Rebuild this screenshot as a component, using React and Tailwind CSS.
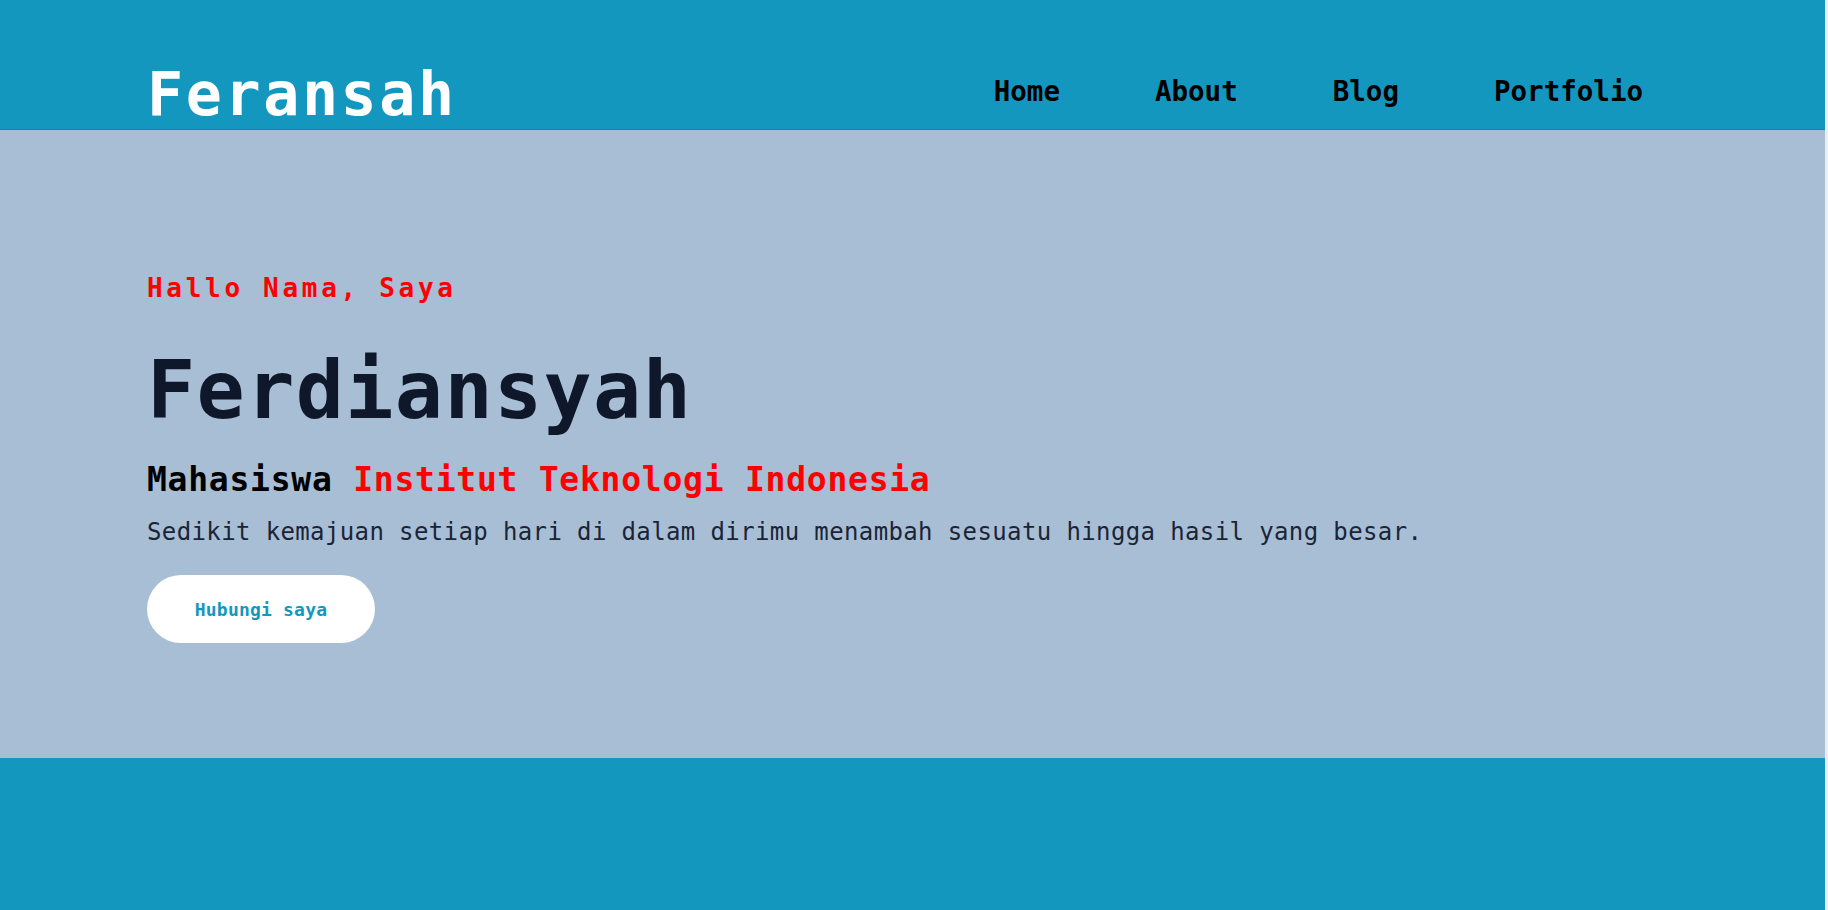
import React from 'react';

// Halaman portofolio sederhana — header, hero, footer
const navLinks = ['Home', 'About', 'Blog', 'Portfolio'];

const Header = () => (
  <header className="h-[130px] bg-[#1497bf] border-b border-[#0e87ab] flex items-start justify-between pl-[147px] pr-[182px]">
    <h1 className="mt-[64px] text-white text-[60px] font-bold leading-none tracking-[2.6px]">Feransah</h1>
    <nav className="mt-[78px] flex items-center gap-[95px]">
      {navLinks.map((link) => (
        <a key={link} href="#" className="text-black text-[27.5px] font-bold leading-none">
          {link}
        </a>
      ))}
    </nav>
  </header>
);

const Hero = () => (
  <section className="h-[628px] bg-[#a8bed5] pl-[147px] pt-[145px]">
    <p className="text-[#ff0000] text-[26px] font-bold leading-none tracking-[3.7px]">Hallo Nama, Saya</p>
    <h2 className="mt-[50px] text-[#0f172a] text-[80px] font-bold leading-none tracking-[1.4px]">Ferdiansyah</h2>
    <h3 className="mt-[32px] text-[33px] font-bold leading-none tracking-[0.75px]">
      <span className="text-black">Mahasiswa </span>
      <span className="text-[#ff0000]">Institut Teknologi Indonesia</span>
    </h3>
    <p className="mt-[24px] text-[#1b2436] text-[24px] leading-none tracking-[0.38px]">
      Sedikit kemajuan setiap hari di dalam dirimu menambah sesuatu hingga hasil yang besar.
    </p>
    <button
      type="button"
      className="mt-[31px] w-[228px] h-[68px] rounded-full bg-white text-[#1497bf] text-[18px] font-bold tracking-[0.2px] flex items-center justify-center"
    >
      Hubungi saya
    </button>
  </section>
);

export default function App() {
  return (
    <div className="min-h-screen bg-[#ececec] flex" style={{ fontFamily: '"DejaVu Sans Mono", monospace' }}>
      <div className="w-[1825px] flex flex-col">
        <Header />
        <Hero />
        <footer className="flex-1 min-h-[152px] bg-[#1497bf]" />
      </div>
    </div>
  );
}
